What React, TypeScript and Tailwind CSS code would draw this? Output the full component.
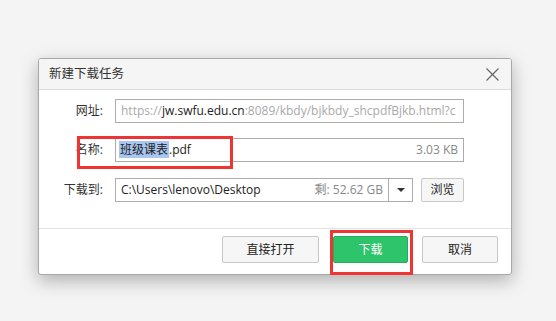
const font = { fontFamily: '"Open Sans", "Noto Sans CJK SC", sans-serif' };

function Label({ text }: { text: string }) {
  return <div className="w-[65px] text-right text-[12px] text-[#333] pr-[1px]">{text}</div>;
}

export default function App() {
  return (
    <div className="relative w-[556px] h-[321px] bg-[#f4f4f4] pt-[58px] pl-[38px]" style={font}>
      <div className="w-[474px] h-[217px] flex flex-col border border-[#a8a8a8] rounded-[3px] bg-white shadow-[0_6px_18px_rgba(0,0,0,0.28)] overflow-hidden">
        {/* title bar */}
        <div className="h-[31px] shrink-0 flex items-center justify-between pl-[10px] pr-[12px] bg-[#f5f5f5] border-b border-[#dcdcdc]">
          <span className="text-[12.5px] text-[#333]">新建下载任务</span>
          <svg width="13" height="13" viewBox="0 0 13 13" className="text-[#666]">
            <path d="M0.5 0.5 L12.5 12.5 M12.5 0.5 L0.5 12.5" stroke="currentColor" strokeWidth="1.2" fill="none" />
          </svg>
        </div>

        {/* form */}
        <div className="flex flex-col gap-[15px] pt-[9px] h-[139px] shrink-0 border-b border-[#e3e3e3]">
          <div className="flex items-center gap-[11px]">
            <Label text="网址:" />
            <div className="w-[349px] h-[24px] border border-[#acacac] flex items-center px-[5px] overflow-hidden whitespace-nowrap text-[12px]">
              <span className="text-[#a9a9a9]">https://</span>
              <span className="text-[#222]">jw.swfu.edu.cn</span>
              <span className="text-[#a9a9a9]">:8089/kbdy/bjkbdy_shcpdfBjkb.html?c</span>
            </div>
          </div>
          <div className="flex items-center gap-[11px]">
            <Label text="名称:" />
            <div className="w-[349px] h-[24px] border border-[#acacac] flex items-center justify-between pl-[3px] pr-[5px] text-[12px]">
              <span className="text-[#222]">
                <span className="bg-[#a8c6f0] px-[1px]">班级课表</span>.pdf
              </span>
              <span className="text-[#888]">3.03 KB</span>
            </div>
          </div>
          <div className="flex items-center gap-[11px] mt-[1px]">
            <Label text="下载到:" />
            <div className="w-[298px] h-[24px] border border-[#acacac] flex text-[12px]">
              <div className="flex-1 flex items-center justify-between px-[5px]">
                <span className="text-[#222]">C:\Users\lenovo\Desktop</span>
                <span className="text-[#888]">剩: 52.62 GB</span>
              </div>
              <div className="w-[24px] border-l border-[#acacac] flex items-center justify-center">
                <div className="w-0 h-0 border-l-[4px] border-r-[4px] border-t-[4px] border-l-transparent border-r-transparent border-t-[#333]" />
              </div>
            </div>
            <button className="-ml-[3px] w-[43px] h-[24px] border border-[#c8c8c8] rounded-[2px] bg-[#f6f6f6] text-[12px] text-[#222]">浏览</button>
          </div>
        </div>

        {/* footer */}
        <div className="flex-1 flex items-start justify-end pt-[7px] pr-[13px] gap-[14px]">
          <button className="w-[97px] h-[27px] border border-[#c8c8c8] rounded-[2px] bg-[#f6f6f6] text-[12px] text-[#222]">直接打开</button>
          <button className="w-[75px] h-[27px] border border-[#25ad5c] rounded-[2px] bg-[#2ec46c] text-[12px] text-white">下载</button>
          <button className="w-[76px] h-[27px] border border-[#c8c8c8] rounded-[2px] bg-[#f6f6f6] text-[12px] text-[#222]">取消</button>
        </div>
      </div>

      {/* red annotation boxes */}
      <div className="absolute left-[77px] top-[136px] w-[156px] h-[33px] border-[3px] border-[#ef3434]" />
      <div className="absolute left-[330px] top-[230px] w-[83px] h-[45px] border-[3px] border-[#ef3434]" />
    </div>
  );
}
